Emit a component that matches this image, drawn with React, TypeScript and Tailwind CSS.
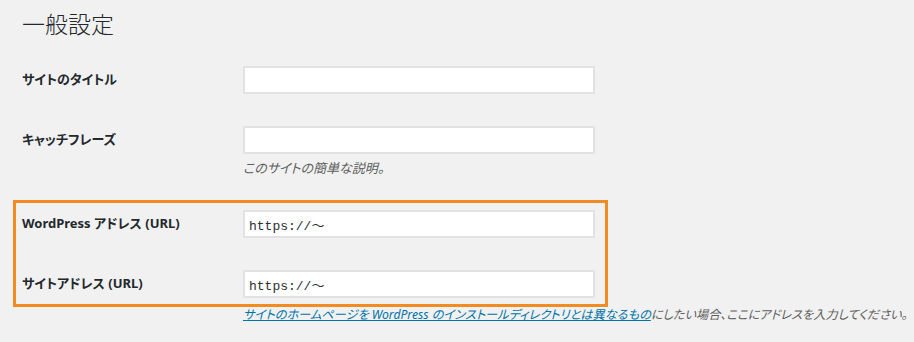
const labelCls =
  "w-[221px] shrink-0 text-[13px] font-bold text-[#23282d] [font-feature-settings:'palt']";
const inputCls =
  "w-[352px] h-[28px] bg-white border-2 border-[#e2e2e2] px-[4px] text-[13px] text-[#2c3035] outline-none [font-family:'Liberation_Mono','DejaVu_Sans_Mono','Noto_Sans_CJK_JP',monospace]";

function Row({ label, value = '' }: { label: string; value?: string }) {
  return (
    <div className="flex items-center">
      <div className={labelCls}>{label}</div>
      <input className={inputCls} defaultValue={value} readOnly />
    </div>
  );
}

export default function App() {
  return (
    <div className="w-[914px] h-[342px] overflow-hidden bg-[#f1f1f1] pl-[22px] pt-[9px] [font-family:'Noto_Sans','Noto_Sans_CJK_JP',sans-serif]">
      <h1 className="text-[23px] leading-[29px] font-light text-[#23282d] [font-family:'Noto_Sans_CJK_JP',sans-serif]">
        一般設定
      </h1>

      <div className="mt-[28px]">
        <Row label="サイトのタイトル" />
      </div>

      <div className="mt-[32px]">
        <Row label="キャッチフレーズ" />
        <p className="ml-[221px] mt-[5px] text-[13px] leading-[18px] italic text-[#5f5f5f] [font-feature-settings:'palt']">
          このサイトの簡単な説明。
        </p>
      </div>

      <div className="mt-[23px] -ml-[9px] w-[595px] border-[3px] border-[#f28c22] pl-[6px] pt-[7px] pb-[6px]">
        <Row label="WordPress アドレス (URL)" value="https://〜" />
        <div className="mt-[32px]">
          <Row label="サイトアドレス (URL)" value="https://〜" />
        </div>
      </div>

      <p className="ml-[221px] -mt-[1px] text-[12.2px] leading-[18px] italic text-[#5f5f5f] whitespace-nowrap [font-feature-settings:'palt']">
        <a href="#" className="text-[#0073aa] underline">
          サイトのホームページを WordPress のインストールディレクトリとは異なるもの
        </a>
        にしたい場合、ここにアドレスを入力してください。
      </p>
    </div>
  );
}
